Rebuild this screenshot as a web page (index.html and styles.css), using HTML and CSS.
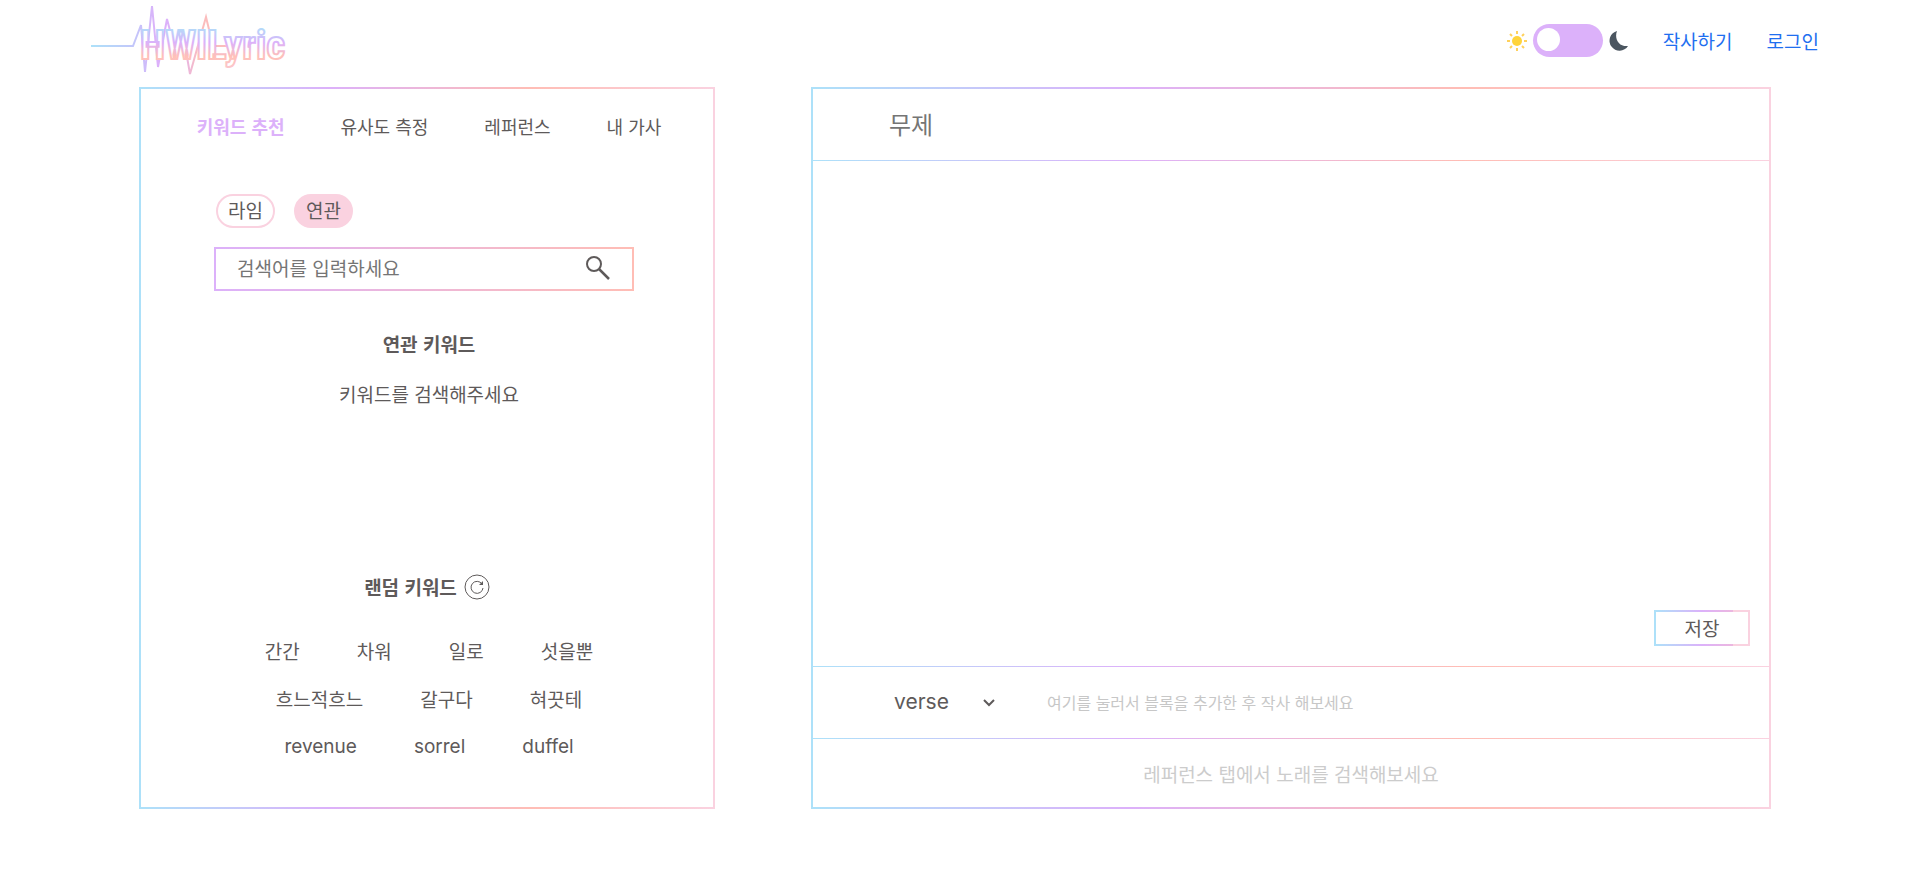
FILE: index.html
```html
<!DOCTYPE html>
<html lang="ko">
<head>
<meta charset="utf-8">
<meta name="viewport" content="width=device-width, initial-scale=1">
<title>HWILyric</title>
<link rel="stylesheet" href="styles.css">
</head>
<body>
<header class="header">
  <a class="logo" href="#" aria-label="HWILyric">
    <svg width="200" height="74" viewBox="0 0 200 74">
      <defs>
        <linearGradient id="wave" gradientUnits="userSpaceOnUse" x1="0" y1="0" x2="126" y2="0">
          <stop offset="0" stop-color="#ade1f9"/>
          <stop offset="0.38" stop-color="#c6c3fa"/>
          <stop offset="0.52" stop-color="#dcb1fa"/>
          <stop offset="0.68" stop-color="#dcb1fa"/>
          <stop offset="0.86" stop-color="#fbbdbd"/>
          <stop offset="1" stop-color="#fbbdbd"/>
        </linearGradient>
        <linearGradient id="word" gradientUnits="userSpaceOnUse" x1="0" y1="22" x2="0" y2="64">
          <stop offset="0" stop-color="#ade1f9"/>
          <stop offset="0.4" stop-color="#dcb1fa"/>
          <stop offset="0.72" stop-color="#ffc0b8"/>
          <stop offset="1" stop-color="#fbc6cc"/>
        </linearGradient>
      </defs>
      <path d="M0 42H42L50 21L54 68L61 2L67 63L76 15L84 46L92 30L99 70L115 13L122 42H138" fill="none" stroke="url(#wave)" stroke-width="2"/>
      <text class="logo-word" x="49" y="55">HWILyric</text>
    </svg>
  </a>
  <nav class="nav">
    <div class="theme">
      <svg width="20" height="20" viewBox="0 0 20 20" aria-hidden="true">
        <circle cx="10" cy="10" r="5" fill="#ffd43b"/>
        <path d="M10 0V3M10 17V20M0 10H3M17 10H20M3 3L5 5M15 15L17 17M17 3L15 5M5 15L3 17" stroke="#ffd15c" stroke-width="2"/>
      </svg>
      <input class="switch" type="checkbox" role="switch" aria-label="다크 모드">
      <svg width="20" height="20" viewBox="0 0 20 20" aria-hidden="true">
        <path d="M8 0A10 10 0 1 0 19 15C10 16 5 8 8 0Z" fill="#4b5660"/>
      </svg>
    </div>
    <a class="nav-link" href="#">작사하기</a>
    <a class="nav-link" href="#">로그인</a>
  </nav>
</header>
<main class="workspace">
  <section class="panel finder">
    <div class="tabs" role="tablist">
      <button class="tab tab-active" role="tab" aria-selected="true">키워드 추천</button>
      <button class="tab" role="tab">유사도 측정</button>
      <button class="tab" role="tab">레퍼런스</button>
      <button class="tab" role="tab">내 가사</button>
    </div>
    <div class="chips">
      <button class="chip">라임</button>
      <button class="chip chip-active">연관</button>
    </div>
    <form class="search">
      <input class="search-input" type="text" placeholder="검색어를 입력하세요" aria-label="검색어">
      <button class="icon-button" type="button" aria-label="검색">
        <svg width="24" height="24" viewBox="0 0 24 24" fill="none" stroke="#5e5a5a">
          <circle cx="8" cy="8" r="7" stroke-width="2"/>
          <path d="M13 13L23 23" stroke-width="2.5"/>
        </svg>
      </button>
    </form>
    <div class="related">
      <h2 class="heading">연관 키워드</h2>
      <p class="message">키워드를 검색해주세요</p>
    </div>
    <div class="random">
      <div class="random-title">
        <h2 class="heading">랜덤 키워드</h2>
        <button class="icon-button" type="button" aria-label="새로고침">
          <svg width="26" height="26" viewBox="0 0 26 26" fill="none" stroke="#5e5a5a">
            <circle cx="13" cy="13" r="12"/>
            <path d="M18 10A6 6 0 1 0 19 14"/>
            <path d="M19 7V11H15Z" fill="#5e5a5a" stroke="none"/>
          </svg>
        </button>
      </div>
      <div class="words">
        <div class="word-row"><span>간간</span><span>차워</span><span>일로</span><span>섯을뿐</span></div>
        <div class="word-row"><span>흐느적흐느</span><span>갈구다</span><span>혀끗테</span></div>
        <div class="word-row latin"><span>revenue</span><span>sorrel</span><span>duffel</span></div>
      </div>
    </div>
  </section>
  <section class="panel editor">
    <input class="title-input" type="text" placeholder="무제" aria-label="제목">
    <div class="canvas">
      <button class="save" type="button">저장</button>
    </div>
    <div class="block-row">
      <div class="select-wrap">
        <select class="block-select latin" aria-label="블록 종류"><option>verse</option><option>hook</option></select>
        <svg class="chevron" width="12" height="12" viewBox="0 0 12 12" fill="none" stroke="#5e5a5a" stroke-width="2"><path d="M1 4L6 9L11 4"/></svg>
      </div>
      <button class="block-hint" type="button">여기를 눌러서 블록을 추가한 후 작사 해보세요</button>
    </div>
    <p class="reference-hint">레퍼런스 탭에서 노래를 검색해보세요</p>
  </section>
</main>
</body>
</html>
```
FILE: styles.css
```css
:root {
  --ink: #5e5a5a;
  --blue: #ade1f9;
  --purple: #dcb1fa;
  --peach: #ffbdb5;
  --pink: #fad2e0;
  --rainbow: linear-gradient(90deg, var(--blue), var(--purple) 33%, var(--peach) 68%, var(--pink));
}

* {
  box-sizing: border-box;
}

body {
  margin: 0;
  background: #fff;
  color: var(--ink);
  font-family: "Noto Sans CJK KR", sans-serif;
  font-size: 19px;
  line-height: 28px;
}

button,
input,
select {
  padding: 0;
  border: 0;
  background: none;
  color: inherit;
  font: inherit;
}

button {
  cursor: pointer;
}

.latin {
  font-family: Inter, sans-serif;
}

.header {
  display: flex;
  justify-content: space-between;
  height: 87px;
  padding: 4px 86px 0 91px;
}

.logo svg {
  display: block;
}

.logo-word {
  fill: #fff;
  stroke: url(#word);
  stroke-width: 2px;
  font-family: "Roboto Condensed", Roboto, sans-serif;
  font-size: 41px;
  font-weight: 700;
}

.nav {
  display: flex;
  align-items: center;
  height: 73px;
  gap: 34px;
}

.theme {
  display: flex;
  align-items: center;
  gap: 6px;
}

.switch {
  appearance: none;
  display: flex;
  align-items: center;
  width: 70px;
  height: 33px;
  margin: 0;
  padding: 0 4px 2px;
  border-radius: 17px;
  background: var(--purple);
}

.switch::before {
  content: "";
  width: 23px;
  height: 23px;
  border-radius: 50%;
  background: #fff;
}

.nav-link {
  color: #1f6ff0;
  text-decoration: none;
}

.workspace {
  display: grid;
  grid-template-columns: 3fr 5fr;
  gap: 96px;
  min-height: 722px;
  padding: 0 134px 0 139px;
}

.panel {
  display: flex;
  flex-direction: column;
  border: 2px solid;
  border-image: var(--rainbow) 1;
}

.tabs {
  display: flex;
  justify-content: center;
  gap: 56px;
  padding: 23px 0 0 4px;
  font-size: 18px;
}

.tab-active {
  color: var(--purple);
  font-weight: 700;
}

.chips {
  display: flex;
  gap: 19px;
  padding: 54px 75px 0;
}

.chip {
  height: 34px;
  padding: 0 10px 2px;
  border: 2px solid var(--pink);
  border-radius: 17px;
}

.chip-active {
  background: var(--pink);
}

.search {
  display: flex;
  align-items: center;
  height: 44px;
  margin: 19px 79px 0 73px;
  padding: 0 22px 2px 21px;
  border: 2px solid;
  border-image: linear-gradient(90deg, var(--purple), var(--peach)) 1;
}

.search-input {
  flex: 1;
  min-width: 0;
}

.search-input::placeholder,
.title-input::placeholder {
  color: #757575;
  opacity: 1;
}

.icon-button svg {
  display: block;
}

.related {
  padding: 39px 0 0 4px;
  text-align: center;
}

.heading,
.message {
  margin: 0;
}

.heading {
  font-size: 19px;
  font-weight: 700;
}

.message {
  padding-top: 22px;
}

.random {
  margin-top: auto;
  padding: 0 0 46px 4px;
}

.random-title {
  display: flex;
  justify-content: center;
  align-items: center;
  gap: 7px;
  padding-right: 4px;
}

.words {
  display: flex;
  flex-direction: column;
  gap: 20px;
  padding-top: 36px;
}

.word-row {
  display: flex;
  justify-content: center;
  gap: 57px;
}

.title-input {
  height: 72px;
  padding: 0 76px 4px;
  font-size: 24px;
}

.canvas {
  flex: 1;
  display: flex;
  justify-content: flex-end;
  align-items: flex-end;
  padding: 21px 19px;
}

.title-input,
.canvas,
.block-row {
  background: var(--rainbow) bottom / 100% 1px no-repeat;
}

.save {
  width: 96px;
  height: 36px;
  border: 2px solid;
  border-image: linear-gradient(90deg, var(--blue), var(--purple) 50%, #ecb7df 83%, var(--pink) 83%) 1;
}

.block-row {
  display: flex;
  align-items: center;
  gap: 52px;
  height: 72px;
  padding: 0 0 2px 81px;
}

.select-wrap {
  display: grid;
  align-items: center;
  width: 101px;
}

.block-select,
.chevron {
  grid-area: 1 / 1;
}

.block-select {
  appearance: none;
  font-size: 21px;
}

.chevron {
  justify-self: end;
  pointer-events: none;
}

.block-hint {
  color: #c7c7c7;
  font-size: 16px;
}

.reference-hint {
  display: flex;
  justify-content: center;
  align-items: center;
  height: 68px;
  margin: 0;
  padding-top: 2px;
  color: #ccc;
}
```
